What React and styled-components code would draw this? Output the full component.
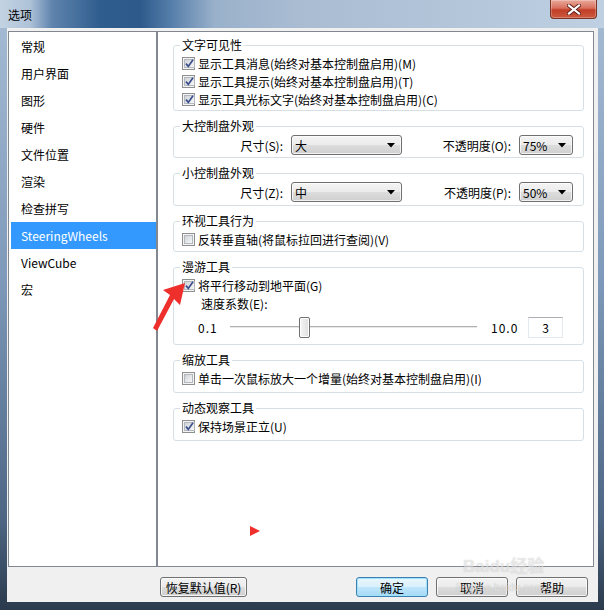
import React from "react"
import styled, { createGlobalStyle } from "styled-components"

const GlobalStyle = createGlobalStyle`
  html, body {
    margin: 0;
    padding: 0;
    background: #fff;
  }
  body {
    font-family: "Noto Sans CJK SC", "Noto Sans", sans-serif;
    font-size: 12px;
    color: #000;
  }
`

const Window = styled.div`
  position: relative;
  width: 604px;
  height: 610px;
  display: flex;
  flex-direction: column;
  overflow: hidden;
  background: linear-gradient(180deg, #a7bdd5 0%, #7f9aba 45%, #4d6684 85%, #2b3a4c 100%);
`

const TitleBar = styled.header`
  height: 28px;
  flex: none;
  display: flex;
  align-items: flex-start;
  justify-content: space-between;
  padding: 0 7px 0 8px;
  background: linear-gradient(to right, #c3d3e3 0px, #aec2d8 30px, #5f84ad 52px, #2f5d8e 100px, #2d5a8b 140px, #577fab 172px, #9ab1cb 215px, #a9bcd2 300px, #b2c5d9 450px, #bfd0e2 604px);
`

const Title = styled.span`
  padding-top: 7px;
  line-height: 16px;
  color: #000;
`

const CloseButton = styled.div`
  width: 47px;
  height: 19px;
  box-sizing: border-box;
  display: flex;
  align-items: center;
  justify-content: center;
  border: 1px solid #7a3326;
  border-top: none;
  border-radius: 0 0 4px 4px;
  background: linear-gradient(180deg, #e9a99b 0%, #d9705d 45%, #c23d27 55%, #cc5a40 100%);
  box-shadow: inset 0 0 0 1px rgba(255, 255, 255, 0.25);
`

const Frame = styled.div`
  flex: 1;
  display: flex;
  padding: 0 6px 8px 7px;
`

const Client = styled.div`
  flex: 1;
  display: flex;
  flex-direction: column;
  background: #f0f0f0;
  padding: 3px 4px 5px 1px;
`

const Main = styled.div`
  display: flex;
  height: 536px;
`

const NavList = styled.ul`
  list-style: none;
  margin: 0;
  width: 149px;
  box-sizing: border-box;
  border: 1px solid #828790;
  background: #fff;
  padding: 1px 0 0;
`

const NavItem = styled.li`
  height: 27px;
  line-height: 27px;
  margin-left: 2px;
  padding-left: 10px;
  background: ${(p) => (p.$active ? "#3399ff" : "transparent")};
  color: ${(p) => (p.$active ? "#fff" : "#000")};
`

const Content = styled.div`
  flex: 1;
  box-sizing: border-box;
  border: 1px solid #828790;
  background: #fff;
  padding: 13px 9px 0 15px;
`

const Group = styled.div`
  border: 1px solid #d5dfe5;
  border-radius: 3px;
  padding: 0 10px ${(p) => p.$pb}px 8px;

  & + & {
    margin-top: 15px;
  }
`

const Legend = styled.div`
  width: fit-content;
  margin: -8px 0 2px -2px;
  padding: 0 2px;
  line-height: 14px;
  background: #fff;
`

const Row = styled.label`
  display: flex;
  align-items: center;
  gap: 3px;
  height: 18px;
  white-space: nowrap;
`

const Box = styled.span`
  width: 13px;
  height: 13px;
  box-sizing: border-box;
  flex: none;
  display: flex;
  padding: 1px;
  border: 1px solid #8e8f8f;
  background: #f4f4f4;
`

const BoxInner = styled.span`
  flex: 1;
  display: flex;
  align-items: center;
  justify-content: center;
  border: 1px solid #b3b8bf;
  background: linear-gradient(135deg, #cfd3d9, #f7f7f7);
`

const SelectRow = styled.div`
  display: grid;
  grid-template-columns: 101px 111px 1fr 54px;
  column-gap: 8px;
  align-items: center;
  height: 20px;
`

const FieldLabel = styled.span`
  text-align: right;
  white-space: nowrap;
`

const Select = styled.div`
  height: 20px;
  box-sizing: border-box;
  display: flex;
  align-items: center;
  justify-content: space-between;
  padding: 0 6px 0 3px;
  border: 1px solid #707070;
  border-radius: 3px;
  background: linear-gradient(180deg, #f4f4f4 0%, #ebebeb 50%, #dddddd 51%, #cfcfcf 100%);
  box-shadow: inset 0 0 0 1px rgba(255, 255, 255, 0.7);
`

const SpeedLabel = styled.div`
  height: 20px;
  line-height: 20px;
  padding-left: 19px;
`

const SliderRow = styled.div`
  display: flex;
  align-items: center;
  height: 26px;
  padding-left: 16px;
`

const RangeText = styled.span`
  width: ${(p) => p.$w}px;
  flex: none;
  margin-left: ${(p) => p.$ml || 0}px;
  letter-spacing: 1px;
`

const Track = styled.div`
  position: relative;
  width: 247px;
  height: 21px;
  flex: none;

  &::before {
    content: "";
    position: absolute;
    left: 0;
    right: 0;
    top: 9px;
    height: 1px;
    background: #b0b0b0;
    border-bottom: 1px solid #e8e8e8;
  }
`

const Thumb = styled.div`
  position: absolute;
  top: 0;
  width: 11px;
  height: 21px;
  box-sizing: border-box;
  border: 1px solid #707070;
  border-radius: 2px;
  background: linear-gradient(90deg, #f6f6f6, #dedede);
  box-shadow: inset 0 0 0 1px #fff;
`

const NumBox = styled.div`
  width: 35px;
  height: 21px;
  box-sizing: border-box;
  border: 1px solid #e3e9ef;
  border-top-color: #abadb3;
  background: #fff;
  line-height: 19px;
  text-align: center;
`

const Footer = styled.div`
  display: flex;
  align-items: center;
  margin-top: 10px;
  padding: 0 6px 0 152px;
  gap: 8px;
`

const Spacer = styled.div`
  flex: 1;
`

const Button = styled.div`
  width: ${(p) => p.$w || 72}px;
  height: 20px;
  box-sizing: border-box;
  border: 1px solid ${(p) => (p.$default ? "#3c7fb1" : "#707070")};
  border-radius: 3px;
  display: flex;
  align-items: center;
  justify-content: center;
  background: ${(p) =>
    p.$default
      ? "linear-gradient(180deg, #eaf6fd 0%, #d9f0fc 50%, #bee6fd 51%, #a7d9f5 100%)"
      : "linear-gradient(180deg, #f2f2f2 0%, #ebebeb 50%, #dddddd 51%, #cfcfcf 100%)"};
  box-shadow: inset 0 0 0 1px ${(p) => (p.$default ? "#9fe2fb" : "rgba(255,255,255,0.75)")};
`

const Overlay = styled.svg`
  position: absolute;
  left: 0;
  top: 0;
  pointer-events: none;
`

const Watermark = styled.div`
  position: absolute;
  left: ${(p) => p.$x}px;
  top: ${(p) => p.$y}px;
  font-family: "Liberation Sans", "Noto Sans CJK SC", sans-serif;
  font-size: ${(p) => p.$size}px;
  line-height: 1;
  font-weight: bold;
  color: rgba(255, 255, 255, 0.5);
  text-shadow: 0 0 1px rgba(90, 90, 90, 0.3);
  pointer-events: none;
  white-space: nowrap;
`

const navItems = ["常规", "用户界面", "图形", "硬件", "文件位置", "渲染", "检查拼写", "SteeringWheels", "ViewCube", "宏"]

function Check({ checked, children }) {
  return (
    <Row>
      <Box>
        <BoxInner>
          {checked && (
            <svg width="9" height="9" viewBox="0 0 9 9">
              <path d="M1 4.6 L3.3 7.4 L8 0.8" fill="none" stroke="#3b4f8c" strokeWidth="1.7" />
            </svg>
          )}
        </BoxInner>
      </Box>
      <span>{children}</span>
    </Row>
  )
}

function Arrow() {
  return (
    <svg width="8" height="5" viewBox="0 0 8 5">
      <path d="M0 0 H8 L4 4.5 Z" fill="#000" />
    </svg>
  )
}

function Slider({ min, max, value }) {
  const left = ((value - min) / (max - min)) * (247 - 11)
  return (
    <Track>
      <Thumb style={{ left }} />
    </Track>
  )
}

export default function App() {
  return (
    <>
      <GlobalStyle />
      <Window>
        <TitleBar>
          <Title>选项</Title>
          <CloseButton>
            <svg width="14" height="11" viewBox="0 0 14 11">
              <path d="M2 1.5 L12 9.5 M12 1.5 L2 9.5" stroke="#5a2018" strokeWidth="4" strokeLinecap="square" />
              <path d="M2 1.5 L12 9.5 M12 1.5 L2 9.5" stroke="#fff" strokeWidth="2.2" strokeLinecap="square" />
            </svg>
          </CloseButton>
        </TitleBar>
        <Frame>
          <Client>
            <Main>
              <NavList>
                {navItems.map((n) => (
                  <NavItem key={n} $active={n === "SteeringWheels"}>
                    {n}
                  </NavItem>
                ))}
              </NavList>
              <Content>
                <Group $pb={2}>
                  <Legend>文字可见性</Legend>
                  <Check checked>显示工具消息(始终对基本控制盘启用)(M)</Check>
                  <Check checked>显示工具提示(始终对基本控制盘启用)(T)</Check>
                  <Check checked>显示工具光标文字(始终对基本控制盘启用)(C)</Check>
                </Group>
                <Group $pb={2}>
                  <Legend>大控制盘外观</Legend>
                  <SelectRow>
                    <FieldLabel>尺寸(S):</FieldLabel>
                    <Select>
                      <span>大</span>
                      <Arrow />
                    </Select>
                    <FieldLabel>不透明度(O):</FieldLabel>
                    <Select>
                      <span>75%</span>
                      <Arrow />
                    </Select>
                  </SelectRow>
                </Group>
                <Group $pb={3}>
                  <Legend>小控制盘外观</Legend>
                  <SelectRow>
                    <FieldLabel>尺寸(Z):</FieldLabel>
                    <Select>
                      <span>中</span>
                      <Arrow />
                    </Select>
                    <FieldLabel>不透明度(P):</FieldLabel>
                    <Select>
                      <span>50%</span>
                      <Arrow />
                    </Select>
                  </SelectRow>
                </Group>
                <Group $pb={3}>
                  <Legend>环视工具行为</Legend>
                  <Check>反转垂直轴(将鼠标拉回进行查阅)(V)</Check>
                </Group>
                <Group $pb={4}>
                  <Legend>漫游工具</Legend>
                  <Check checked>将平行移动到地平面(G)</Check>
                  <SpeedLabel>速度系数(E):</SpeedLabel>
                  <SliderRow>
                    <RangeText $w={32}>0.1</RangeText>
                    <Slider min={0.1} max={10} value={3} />
                    <RangeText $w={37} $ml={14}>10.0</RangeText>
                    <NumBox>3</NumBox>
                  </SliderRow>
                </Group>
                <Group $pb={5}>
                  <Legend>缩放工具</Legend>
                  <Check>单击一次鼠标放大一个增量(始终对基本控制盘启用)(I)</Check>
                </Group>
                <Group $pb={5}>
                  <Legend>动态观察工具</Legend>
                  <Check checked>保持场景正立(U)</Check>
                </Group>
              </Content>
            </Main>
            <Footer>
              <Button $w={87}>恢复默认值(R)</Button>
              <Spacer />
              <Button $default>确定</Button>
              <Button>取消</Button>
              <Button>帮助</Button>
            </Footer>
          </Client>
        </Frame>
        <Watermark $x={463} $y={558} $size={17}>Baidu经验</Watermark>
        <Watermark $x={456} $y={583} $size={10}>jingyan.baidu.com</Watermark>
        <Overlay width="604" height="610" viewBox="0 0 604 610">
          <polygon points="185,283 180,305 174,299 157,331 153,328 170,295 163,290" fill="#ee2f2b" />
          <polygon points="250,526 260,531 250,536" fill="#ee2f2b" />
        </Overlay>
      </Window>
    </>
  )
}
